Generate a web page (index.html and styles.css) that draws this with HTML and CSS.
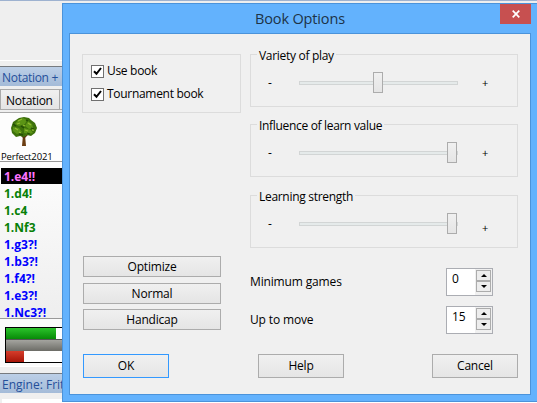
FILE: index.html
```html
<!DOCTYPE html>
<html lang="en">
<head>
<meta charset="utf-8">
<title>Book Options</title>
<link rel="stylesheet" href="styles.css">
</head>
<body>
<div class="app">
  <div class="toolbar"></div>
  <div class="pane-title">Notation +</div>
  <div class="tabs"><span class="tab">Notation</span><span class="tab next"></span></div>
  <div class="book">
    <svg class="tree" width="28" height="32" viewBox="0 0 28 32">
      <path d="M13 19h2l1 11h-4z" fill="#6b3d12"/><path d="M14 22l-4-4M14 22l4-4" stroke="#5a3510" stroke-width="1.3"/>
      <path d="M9 2l5-1 5 1 2 2 4 3 2 5-2 5-4 3-4-1-3 2-4-1-4 1-4-4-1-5 2-6 3-2z" fill="#3d700b"/>
      <path d="M8 4l5-2 4 2-2 4-6 2-4-2zM18 5l4 3 1 4-4 1-4-3zM3 11l6 1 3 4-5 2-4-3zM14 12l7 2 2 3-4 1-5-1z" fill="#5b9415"/>
      <path d="M8 5l4-2M7 8l3-1M18 7l3 2M5 12l3 2M15 14l3 1M13 9l2 1M22 14l2 0M9 16l2 1" stroke="#92bb32" stroke-width="1.3"/>
      <path d="M3 8l3 2M11 10l3 2M21 12l3 1M9 18l4 1M16 4l2 1M17 17l3 1" stroke="#244e05" stroke-width="1.3"/>
    </svg>
    <span class="book-name">Perfect2021</span>
  </div>
  <div class="moves">
    <div class="move current">1.e4!!</div>
    <div class="move good">1.d4!</div>
    <div class="move good">1.c4</div>
    <div class="move good">1.Nf3</div>
    <div class="move">1.g3?!</div>
    <div class="move">1.b3?!</div>
    <div class="move">1.f4?!</div>
    <div class="move">1.e3?!</div>
    <div class="move">1.Nc3?!</div>
  </div>
  <div class="stats"><div class="bars"><div class="bar win"></div><div class="bar draw"></div><div class="bar loss"></div></div></div>
  <div class="pane-title engine">Engine: Fritz</div>
  <div class="engine-body"></div>
</div>

<div class="dialog">
  <div class="titlebar">
    <span class="title">Book Options</span>
    <div class="close"><svg width="8" height="8" viewBox="0 0 8 8"><path d="M.7.7l6.6 6.6M7.3.7L.7 7.3" stroke="#fff" stroke-width="1.7"/></svg></div>
  </div>
  <div class="client">
    <div class="columns">
      <div class="left">
        <div class="group checks">
          <label class="check"><span class="box"><svg width="9" height="9" viewBox="0 0 9 9"><path d="M1 4.2l2.5 2.6L8 1" fill="none" stroke="#000" stroke-width="2"/></svg></span><span class="check-text">Use book</span></label>
          <label class="check"><span class="box"><svg width="9" height="9" viewBox="0 0 9 9"><path d="M1 4.2l2.5 2.6L8 1" fill="none" stroke="#000" stroke-width="2"/></svg></span><span class="check-text tour">Tournament book</span></label>
        </div>
        <div class="presets">
          <div class="button">Optimize</div>
          <div class="button">Normal</div>
          <div class="button">Handicap</div>
        </div>
      </div>
      <div class="right">
        <div class="group slider-group"><span class="legend variety">Variety of play</span><span class="minus">-</span><div class="track"><i class="thumb middle"></i></div><span class="plus">+</span></div>
        <div class="group slider-group"><span class="legend influence">Influence of learn value</span><span class="minus">-</span><div class="track"><i class="thumb"></i></div><span class="plus">+</span></div>
        <div class="group slider-group last"><span class="legend learning">Learning strength</span><span class="minus">-</span><div class="track"><i class="thumb"></i></div><span class="plus">+</span></div>
        <div class="field"><span class="games">Minimum games</span>
          <div class="spinner"><span class="value">0</span><div class="steps"><div class="step"><i class="up"></i></div><div class="step"><i class="down"></i></div></div></div></div>
        <div class="field"><span class="upto">Up to move</span>
          <div class="spinner"><span class="value">15</span><div class="steps"><div class="step"><i class="up"></i></div><div class="step"><i class="down"></i></div></div></div></div>
      </div>
    </div>
    <div class="footer">
      <div class="button default">OK</div>
      <div class="button">Help</div>
      <div class="button">Cancel</div>
    </div>
  </div>
</div>
</body>
</html>
```
FILE: styles.css
```css
* { box-sizing: border-box; }
body { margin: 0; width: 537px; height: 403px; overflow: hidden; position: relative; background: #efefef; font: 12px/16px "Open Sans", "Noto Sans", sans-serif; color: #000; }
svg { display: block; }

.app { width: 537px; height: 403px; display: flex; flex-direction: column; overflow: hidden; }
.app > * { flex: none; }
.toolbar { height: 61px; margin-bottom: 5px; border-top: 1px solid #9eb2d0; border-bottom: 1px solid #fff; }
.pane-title { height: 20px; padding-left: 2px; border-top: 1px solid #777b80; background: linear-gradient(#bccfe7, #a4bbd8); color: #244f9a; line-height: 21px; white-space: nowrap; letter-spacing: -.3px; }
.tabs { display: flex; height: 27px; padding-top: 3px; border-bottom: 1px solid #aaa; }
.tab { width: 60px; height: 21px; border: 1px solid #aaa; background: linear-gradient(#f0f0f0, #e4e4e4); padding-left: 5px; line-height: 21px; letter-spacing: -.3px; }
.tab.next { border-left: 0; background: #eaeaea; }
.book { height: 49px; background: #fdfdfd; border-bottom: 1px solid #999; padding: 3px 0 0 1px; }
.tree { margin-left: 9px; }
.book-name { display: block; font-size: 9.5px; line-height: 12px; margin-top: 3px; letter-spacing: -.15px; }
.moves { height: 157px; padding: 6px 0 0 1px; border-bottom: 1px solid #999; background: linear-gradient(#fdfdfd, #eee); }
.move { height: 17px; padding-left: 3px; font-weight: 700; line-height: 18px; color: #00f; }
.move.good { color: #078007; }
.move.current { height: 16px; margin-bottom: 1px; background: #000; color: #ff74ff; }
.stats { height: 48px; padding: 8px 0 0 5px; border-bottom: 1px solid #fff; background: #fbfbfb; }
.bars { height: 36px; border: 1px solid #000; background: #fff; }
.bar.win { width: 50px; height: 11px; background: linear-gradient(#2bc32b, #078a07); }
.bar.draw { height: 12px; border-top: 1px solid #555; background: linear-gradient(#a4a49f, #6c6c66); }
.bar.loss { width: 18px; height: 11px; background: linear-gradient(#d63d2b, #a71508); }
.engine { margin-top: 6px; letter-spacing: 0; }
.engine-body { height: 6px; margin: 6px 0 0 2px; background: #fff; }

.dialog { position: absolute; left: 62px; top: 3px; width: 475px; height: 399px; border: 1px solid #4b93da; border-right: 0; background: #63b2fd; padding: 0 6px 6px; }
.titlebar { height: 29px; display: grid; grid-template-columns: 1fr 31px; align-items: start; }
.title { padding: 5px 0 0; margin-left: 31px; text-align: center; font-size: 14.5px; line-height: 20px; letter-spacing: -.15px; color: #1d3347; }
.close { height: 20px; background: #c75050; display: grid; place-items: center; }
.client { width: 462px; height: 362px; border: 1px solid #4b93da; background: #f0f0f0; padding: 20px 12px 0; }
.columns { display: grid; grid-template-columns: 159px 268px; column-gap: 9px; height: 300px; }
.group { border: 1px solid #dcdcdc; }
.checks { height: 59px; padding: 8px 0 0 8px; display: flex; flex-direction: column; gap: 7px; }
.check { display: flex; gap: 3px; align-items: center; height: 16px; white-space: nowrap; }
.check-text { line-height: 18px; letter-spacing: -.3px; }
.box { width: 13px; height: 13px; border: 1px solid #707070; background: #fff; display: grid; place-items: center; }
.presets { margin: 143px 0 0 1px; display: grid; width: 138px; row-gap: 5px; }
.button { height: 21px; border: 1px solid #acacac; background: linear-gradient(#f0f0f0, #e5e5e5); text-align: center; line-height: 19px; letter-spacing: -.2px; }
.presets .button:nth-child(2) { margin-top: 1px; }
.slider-group { height: 53px; margin-bottom: 17px; display: grid; grid-template: 17px 22px / 48px 159px 1fr; }
.slider-group:nth-child(2) { margin-bottom: 18px; }
.slider-group.last { margin-bottom: 20px; }
.legend { grid-column: 1 / -1; justify-self: start; height: 16px; margin: -8px 0 0 6px; padding: 0 2px; background: #f0f0f0; white-space: nowrap; line-height: 17px; letter-spacing: -.3px; }
.influence { letter-spacing: -.32px; }
.minus { padding: 3px 0 0 17px; }
.track { height: 4px; margin-top: 9px; border: 1px solid #d2d5d5; background: #e5eaea; display: flex; justify-content: flex-end; }
.thumb { width: 10px; height: 21px; margin-top: -10px; border: 1px solid #acacac; background: linear-gradient(#f0f0f0, #e5e5e5); }
.thumb.middle { margin-right: 74px; }
.plus { padding: 3px 0 0 24px; font-size: 11px; }
.last .plus { padding-top: 7px; }
.field { height: 26px; margin-bottom: 12px; display: grid; grid-template-columns: 196px 47px; line-height: 28px; letter-spacing: -.15px; }
.spinner { border: 1px solid #abadb3; background: #fff; display: flex; justify-content: space-between; }
.value { padding-left: 5px; line-height: 20px; }
.steps { width: 17px; padding: 1px; background: #f0f0f0; display: grid; grid-template-rows: 11px 11px; }
.step { border: 1px solid #acacac; background: #ededed; display: grid; place-items: center; }
.up, .down { width: 0; height: 0; border: 3px solid transparent; border-top: 0; border-bottom-color: #000; }
.down { border-top: 3px solid #000; border-bottom: 0; }
.footer { display: grid; grid-template-columns: 86px 86px 86px; column-gap: 89px; padding-left: 1px; }
.footer .button { height: 24px; line-height: 22px; }
.footer .button:last-child { margin-left: -1px; margin-right: 1px; }
.footer .default { border-color: #3399ff; }
```
